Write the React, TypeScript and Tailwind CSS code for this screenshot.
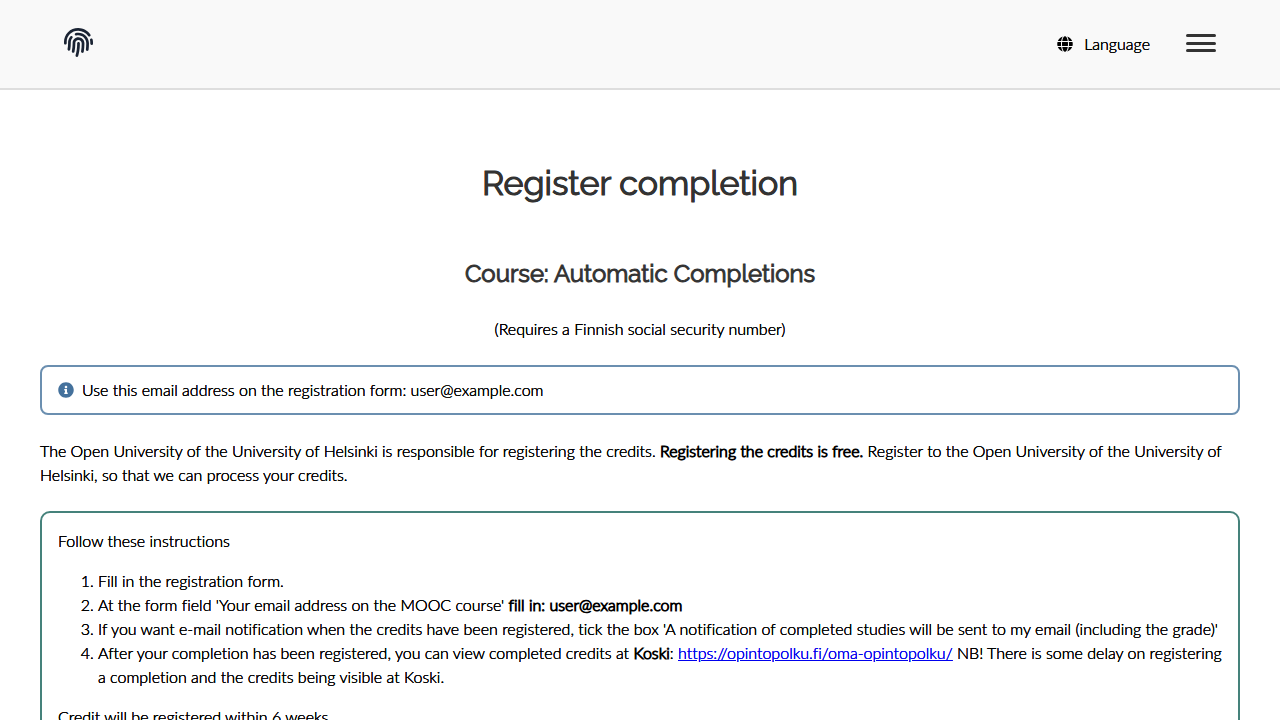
import React from "react";
import { FaFingerprint, FaGlobe, FaInfoCircle } from "react-icons/fa";

function Strong({ children }: { children: React.ReactNode }) {
  return <strong className="font-light [-webkit-text-stroke:1px_#000] [text-shadow:none]">{children}</strong>;
}

export default function App() {
  return (
    <div className="min-h-screen bg-white font-['Lato',sans-serif] text-base leading-6 font-light text-black [font-variant-ligatures:none] [text-shadow:0_0_0_currentColor,0_0_0_currentColor]">
      <header className="flex h-[90px] items-center justify-between border-b-2 border-[#dedede] bg-[#f9f9f9] px-16">
        <a href="#home" aria-label="Home" className="pb-1 text-[#1a2333]">
          <FaFingerprint size={29} />
        </a>
        <div className="flex items-center gap-9">
          <button
            type="button"
            className="flex items-center gap-[11px] [text-shadow:0_0_0_currentColor,0_0_0_currentColor]"
          >
            <FaGlobe size={16} />
            <span>Language</span>
          </button>
          <button type="button" aria-label="Open menu" className="flex h-5 flex-col justify-between pb-[2px]">
            <span className="h-[3px] w-[30px] rounded-sm bg-[#333]" />
            <span className="h-[3px] w-[30px] rounded-sm bg-[#333]" />
            <span className="h-[3px] w-[30px] rounded-sm bg-[#333]" />
          </button>
        </div>
      </header>
      <main className="px-10 pt-16">
        <h1 className="pt-1 text-center font-['Raleway','Lato',sans-serif] text-[34px] leading-[50px] font-normal text-[#333] [-webkit-text-stroke:1px_#333]">
          Register completion
        </h1>
        <h2 className="pt-12 text-center font-['Raleway','Lato',sans-serif] text-2xl leading-9 font-normal text-[#333] [-webkit-text-stroke:1px_#333] [text-shadow:none]">
          Course: Automatic Completions
        </h2>
        <p className="pt-[25px] text-center">(Requires a Finnish social security number)</p>
        <div className="mt-6 flex items-center gap-2 rounded-lg border-2 border-[#6b8fb0] px-4 py-[11px]">
          <FaInfoCircle size={16} className="text-[#44719c]" />
          <span>Use this email address on the registration form: user@example.com</span>
        </div>
        <p className="mt-6">
          The Open University of the University of Helsinki is responsible for registering the credits.{" "}
          <Strong>Registering the credits is free.</Strong> Register to the Open University of the University of
          Helsinki, so that we can process your credits.
        </p>
        <section className="mt-6 rounded-[10px] border-2 border-[#45827b] p-4">
          <p>Follow these instructions</p>
          <ol className="my-4 list-decimal pl-10">
            <li>Fill in the registration form.</li>
            <li>
              At the form field 'Your email address on the MOOC course' <Strong>fill in: user@example.com</Strong>
            </li>
            <li>
              If you want e-mail notification when the credits have been registered, tick the box 'A notification of
              completed studies will be sent to my email (including the grade)'
            </li>
            <li>
              After your completion has been registered, you can view completed credits at <Strong>Koski</Strong>:{" "}
              <a href="https://opintopolku.fi/oma-opintopolku/" className="text-[#0000ee] underline">
                https://opintopolku.fi/oma-opintopolku/
              </a>{" "}
              NB! There is some delay on registering a completion and the credits being visible at Koski.
            </li>
          </ol>
          <p>Credit will be registered within 6 weeks.</p>
        </section>
      </main>
    </div>
  );
}
